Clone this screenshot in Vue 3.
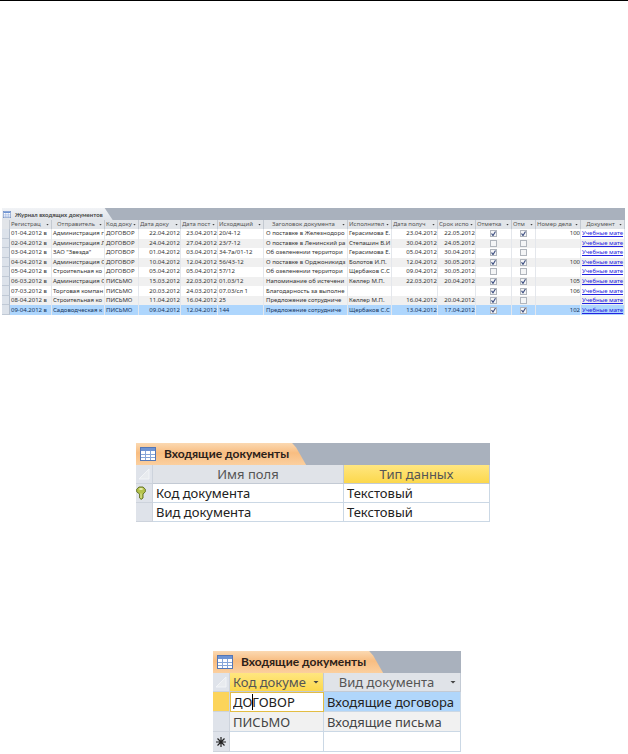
<script setup>
import { ref } from 'vue'

const columns = [
  { title: 'Регистрац', width: 42 },
  { title: 'Отправитель', width: 53, center: true },
  { title: 'Код доку', width: 34 },
  { title: 'Дата доку', width: 42 },
  { title: 'Дата пост', width: 37 },
  { title: 'Исходящий', width: 46 },
  { title: 'Заголовок документа', width: 84, center: true },
  { title: 'Исполнител', width: 44 },
  { title: 'Дата получ', width: 46 },
  { title: 'Срок испо', width: 38 },
  { title: 'Отметка', width: 36 },
  { title: 'Отм', width: 24 },
  { title: 'Номер дела', width: 45 },
  { title: 'Документ', width: 44, center: true },
]
const total = 623

const rows = ref([
  { reg: '01-04.2012 в', from: 'Администрация г', kind: 'ДОГОВОР', date: '22.04.2012', got: '23.04.2012', out: '20/4-12', title: 'О поставке в Железнодоро', who: 'Герасимова Е.', start: '23.04.2012', end: '22.05.2012', done: true, filed: true, num: '100' },
  { reg: '02-04.2012 в', from: 'Администрация Л', kind: 'ДОГОВОР', date: '24.04.2012', got: '27.04.2012', out: '23/7-12', title: 'О поставке в Ленинский ра', who: 'Степашин В.И', start: '30.04.2012', end: '24.05.2012', done: false, filed: false, num: '' },
  { reg: '03-04.2012 в', from: 'ЗАО "Звезда"', kind: 'ДОГОВОР', date: '01.04.2012', got: '03.04.2012', out: '34-7а/01-12', title: 'Об озеленении территори', who: 'Герасимова Е.', start: '05.04.2012', end: '30.04.2012', done: true, filed: false, num: '' },
  { reg: '04-04.2012 в', from: 'Администрация О', kind: 'ДОГОВОР', date: '10.04.2012', got: '12.04.2012', out: '56/43-12', title: 'О поставке в Орджоникидз', who: 'Болотов И.П.', start: '12.04.2012', end: '30.05.2012', done: true, filed: true, num: '100' },
  { reg: '05-04.2012 в', from: 'Строительная ко', kind: 'ДОГОВОР', date: '05.04.2012', got: '05.04.2012', out: '57/12', title: 'Об озеленении территори', who: 'Щербаков С.С', start: '09.04.2012', end: '30.05.2012', done: false, filed: false, num: '' },
  { reg: '06-03.2012 в', from: 'Администрация О', kind: 'ПИСЬМО', date: '15.03.2012', got: '22.03.2012', out: '01.03/12', title: 'Напоминание об истечени', who: 'Келлер М.П.', start: '22.03.2012', end: '20.04.2012', done: true, filed: true, num: '105' },
  { reg: '07-03.2012 в', from: 'Торговая компан', kind: 'ПИСЬМО', date: '20.03.2012', got: '24.03.2012', out: '07.03/сл 1', title: 'Благодарность за выполне', who: '', start: '', end: '', done: true, filed: true, num: '106' },
  { reg: '08-04.2012 в', from: 'Строительная ко', kind: 'ПИСЬМО', date: '11.04.2012', got: '16.04.2012', out: '25', title: 'Предложение сотрудниче', who: 'Келлер М.П.', start: '16.04.2012', end: '20.04.2012', done: true, filed: false, num: '' },
  { reg: '09-04.2012 в', from: 'Садоводческая к', kind: 'ПИСЬМО', date: '09.04.2012', got: '12.04.2012', out: '144', title: 'Предложение сотрудниче', who: 'Щербаков С.С', start: '13.04.2012', end: '17.04.2012', done: true, filed: true, num: '102' },
])
const selected = ref(8)

const fields = [
  { name: 'Код документа', type: 'Текстовый' },
  { name: 'Вид документа', type: 'Текстовый' },
]

const code = ref('ДОГОВОР')
</script>

<template>
  <main class="page">
    <section class="journal">
      <header class="bar">
        <h2 class="tab">
          <svg class="grid-icon" viewBox="0 0 16 14" aria-hidden="true">
            <rect x="0.5" y="0.5" width="15" height="13" fill="#fff" stroke="#5577b5" />
            <rect x="1" y="1" width="14" height="3" fill="#6f94d3" />
            <path d="M1 7.5h14M1 10.5h14M5.5 4v9M10.5 4v9" stroke="#86a5d8" />
          </svg>
          Журнал входящих документов
        </h2>
      </header>
      <table>
        <colgroup>
          <col :style="{ width: (8 / total) * 100 + '%' }">
          <col v-for="c in columns" :key="c.title" :style="{ width: (c.width / total) * 100 + '%' }">
        </colgroup>
        <thead>
          <tr>
            <th class="sel"></th>
            <th v-for="c in columns" :key="c.title">
              <div class="head" :class="{ centered: c.center }">
                <span>{{ c.title }}</span>
                <button type="button" class="arrow" :aria-label="'Фильтр: ' + c.title"></button>
              </div>
            </th>
          </tr>
        </thead>
        <tbody>
          <tr v-for="(r, i) in rows" :key="r.reg" :class="{ selected: i === selected }" @click="selected = i">
            <td class="sel"></td>
            <td>{{ r.reg }}</td>
            <td>{{ r.from }}</td>
            <td>{{ r.kind }}</td>
            <td class="num">{{ r.date }}</td>
            <td class="num">{{ r.got }}</td>
            <td>{{ r.out }}</td>
            <td class="title">{{ r.title }}</td>
            <td>{{ r.who }}</td>
            <td class="num">{{ r.start }}</td>
            <td class="num">{{ r.end }}</td>
            <td class="check"><input v-model="r.done" type="checkbox" aria-label="Отметка"></td>
            <td class="check"><input v-model="r.filed" type="checkbox" aria-label="Отм"></td>
            <td class="num">{{ r.num }}</td>
            <td><a href="#">Учебные мате</a></td>
          </tr>
        </tbody>
      </table>
    </section>

    <section class="sheet design">
      <header class="bar">
        <h2 class="tab">
          <svg class="grid-icon" viewBox="0 0 16 14" aria-hidden="true">
            <rect x="0.5" y="0.5" width="15" height="13" fill="#fff" stroke="#5577b5" />
            <rect x="1" y="1" width="14" height="3" fill="#6f94d3" />
            <path d="M1 7.5h14M1 10.5h14M5.5 4v9M10.5 4v9" stroke="#86a5d8" />
          </svg>
          Входящие документы
        </h2>
      </header>
      <table>
        <colgroup>
          <col class="col-sel">
          <col class="col-name">
          <col>
        </colgroup>
        <thead>
          <tr>
            <th class="sel">
              <svg class="corner" viewBox="0 0 12 12" aria-hidden="true"><path d="M11 1v10H1z" fill="#e8ebef" stroke="#f2f4f7" /></svg>
            </th>
            <th>Имя поля</th>
            <th class="active">Тип данных</th>
          </tr>
        </thead>
        <tbody>
          <tr v-for="(f, i) in fields" :key="f.name">
            <td class="sel">
              <svg v-if="i === 0" class="key" viewBox="0 0 10 14" aria-label="Ключевое поле">
                <path d="M3 1h4l2.3 2.2v2.6L7 8v4L5.2 13.4 3.6 12V8L.7 5.8V3.2z" fill="#b5c34b" stroke="#66752a" />
                <path d="M3.4 3h3.2" stroke="#f7f9d9" stroke-width="1.4" />
                <path d="M5 7.5V12" stroke="#e3eb9c" />
              </svg>
            </td>
            <td>{{ f.name }}</td>
            <td>{{ f.type }}</td>
          </tr>
        </tbody>
      </table>
    </section>

    <section class="sheet data">
      <header class="bar">
        <h2 class="tab">
          <svg class="grid-icon" viewBox="0 0 16 14" aria-hidden="true">
            <rect x="0.5" y="0.5" width="15" height="13" fill="#fff" stroke="#5577b5" />
            <rect x="1" y="1" width="14" height="3" fill="#6f94d3" />
            <path d="M1 7.5h14M1 10.5h14M5.5 4v9M10.5 4v9" stroke="#86a5d8" />
          </svg>
          Входящие документы
        </h2>
      </header>
      <table>
        <colgroup>
          <col class="col-sel">
          <col class="col-code">
          <col>
        </colgroup>
        <thead>
          <tr>
            <th class="sel">
              <svg class="corner" viewBox="0 0 12 12" aria-hidden="true"><path d="M11 1v10H1z" fill="#e8ebef" stroke="#f2f4f7" /></svg>
            </th>
            <th class="active">
              <div class="head">
                <span>Код докуме</span>
                <button type="button" class="arrow" aria-label="Фильтр: Код документа"></button>
              </div>
            </th>
            <th>
              <div class="head centered">
                <span>Вид документа</span>
                <button type="button" class="arrow" aria-label="Фильтр: Вид документа"></button>
              </div>
            </th>
          </tr>
        </thead>
        <tbody>
          <tr class="current">
            <td class="sel"></td>
            <td class="edit">
              <input v-model="code" type="text" aria-label="Код документа">
              <span class="caret"></span>
            </td>
            <td>Входящие договора</td>
          </tr>
          <tr class="alt">
            <td class="sel"></td>
            <td>ПИСЬМО</td>
            <td>Входящие письма</td>
          </tr>
          <tr>
            <td class="sel">
              <svg class="star" viewBox="0 0 10 10" aria-label="Новая запись"><path d="M5 0v10M0 5h10M1.5 1.5l7 7M8.5 1.5l-7 7" stroke="#222" stroke-width="1.2" /></svg>
            </td>
            <td></td>
            <td></td>
          </tr>
        </tbody>
      </table>
    </section>
  </main>
</template>

<style>
body {
  margin: 0;
  background: #fff;
}
</style>

<style scoped>
.page {
  border-top: 1px solid #000;
  padding-top: 207px;
  font-family: 'Noto Sans', 'Open Sans', sans-serif;
  color: #333;
}

table {
  width: 100%;
  table-layout: fixed;
  border-collapse: separate;
  border-spacing: 0;
}

th,
td {
  box-sizing: border-box;
  padding: 0;
  overflow: hidden;
  white-space: nowrap;
  font-weight: 400;
  text-align: left;
}

.bar {
  display: flex;
  background: #a9b1bd;
}

.tab {
  display: flex;
  align-items: center;
  margin: 0;
  font-family: Lato, 'Noto Sans', sans-serif;
  font-weight: 700;
  white-space: nowrap;
}

.grid-icon {
  flex: none;
}

.head {
  display: flex;
  align-items: center;
}

.head span {
  flex: 1;
  min-width: 0;
  overflow: hidden;
}

.centered {
  text-align: center;
}

.arrow {
  flex: none;
  padding: 0;
  border: 0;
  background: #444;
  clip-path: polygon(0 0, 100% 0, 50% 100%);
  cursor: pointer;
}

/* journal */
.journal {
  margin: 0 3px 0 2px;
  font-size: 6px;
  line-height: 9px;
}

.journal .tab {
  gap: 4px;
  height: 12px;
  padding: 0 10px 0 1px;
  font-size: 6px;
  color: #444;
  background: linear-gradient(#f1f3f6, #dfe3e9);
  clip-path: polygon(0 0, calc(100% - 8px) 0, 100% 100%, 0 100%);
}

.journal .grid-icon {
  width: 8px;
  height: 7px;
}

.journal table {
  height: 95px;
}

.journal th {
  padding: 0 2px 0 1px;
  color: #555;
  background: #e2e5e9;
  border-right: 1px solid #c3c9d1;
}

.journal .arrow {
  width: 3px;
  height: 2px;
}

.journal td {
  padding-left: 1px;
  border-right: 1px solid #e4e7ec;
}

.journal td.title {
  padding-left: 2px;
}

.journal tbody tr:nth-child(even) {
  background: #f0f0f0;
}

.journal tbody tr.selected {
  color: #16355c;
  background: #aed6fd;
}

.journal td.sel {
  background: #dce2ea;
  border-right-color: #b4bfcd;
  border-bottom: 1px solid #c0c9d5;
}

.journal .num {
  text-align: right;
}

.journal .check {
  padding: 0;
  text-align: center;
}

.check input {
  display: grid;
  place-items: center;
  box-sizing: border-box;
  width: 7px;
  height: 7px;
  margin: 0 auto;
  appearance: none;
  background: #f4f5f6;
  border: 1px solid #b0b5bc;
}

.check input:checked::after {
  content: '';
  width: 5px;
  height: 5px;
  background: #3f5082;
  clip-path: polygon(0 50%, 20% 40%, 40% 65%, 80% 0, 100% 10%, 45% 100%, 35% 100%);
}

.journal a {
  color: #2323e0;
  text-decoration: underline;
}

/* table windows */
.sheet {
  font-size: 13px;
  line-height: 18px;
}

.sheet .tab {
  gap: 8px;
  height: 22px;
  padding: 0 17px 0 4px;
  font-size: 12px;
  color: #2b211a;
  background: linear-gradient(#fbd9b2, #f8bd81 45%, #fbcf9f);
  clip-path: polygon(0 0, calc(100% - 14px) 0, calc(100% - 10px) 20%, 100% 100%, 0 100%);
}

.sheet .grid-icon {
  width: 16px;
  height: 14px;
}

.sheet th {
  height: 19px;
  color: #555;
  background: #e0e3e8;
  border-right: 1px solid #c3cad4;
  border-bottom: 1px solid #c3cad4;
  text-align: center;
}

.sheet th.active {
  background: linear-gradient(#ffe680, #fcd84c);
}

.sheet td {
  height: 19px;
  padding-left: 3px;
  color: #222;
  border-right: 1px solid #cbd8e5;
  border-bottom: 1px solid #cbd8e5;
}

.sheet .sel {
  padding: 0;
  background: #dfe3ea;
  border-color: #cdd3dc;
}

.sheet svg {
  display: block;
}

.corner {
  width: 12px;
  height: 12px;
  margin: 0 auto;
}

.col-sel {
  width: 17px;
}

.design {
  width: 354px;
  margin: 128px 0 0 136px;
}

.col-name {
  width: 191px;
}

.key {
  width: 10px;
  height: 14px;
}

.data {
  width: 248px;
  margin: 129px 0 0 213px;
}

.data td {
  height: 20px;
}

.col-code {
  width: 94px;
}

.data .head {
  padding: 0 4px 0 3px;
}

.data .head:not(.centered) {
  text-align: left;
}

.data .head span {
  margin-right: 4px;
}

.data .arrow {
  width: 6px;
  height: 3px;
}

.data .current td {
  background: #b0d6fb;
}

.data .current .sel {
  background: #fcd45a;
}

.data .current .edit {
  position: relative;
  padding: 0;
  background: #fff;
  border: 1px solid #e3bd43;
}

.edit input {
  display: block;
  box-sizing: border-box;
  width: 100%;
  padding: 0 0 0 2px;
  border: 0;
  outline: 0;
  font: inherit;
  color: #222;
  background: transparent;
}

.caret {
  position: absolute;
  top: 1px;
  left: 21px;
  width: 1px;
  height: 16px;
  background: #000;
}

.data .alt td:not(.sel) {
  color: #444;
  background: #f1f1f1;
}

.star {
  width: 10px;
  height: 10px;
  margin: 0 auto;
}
</style>
